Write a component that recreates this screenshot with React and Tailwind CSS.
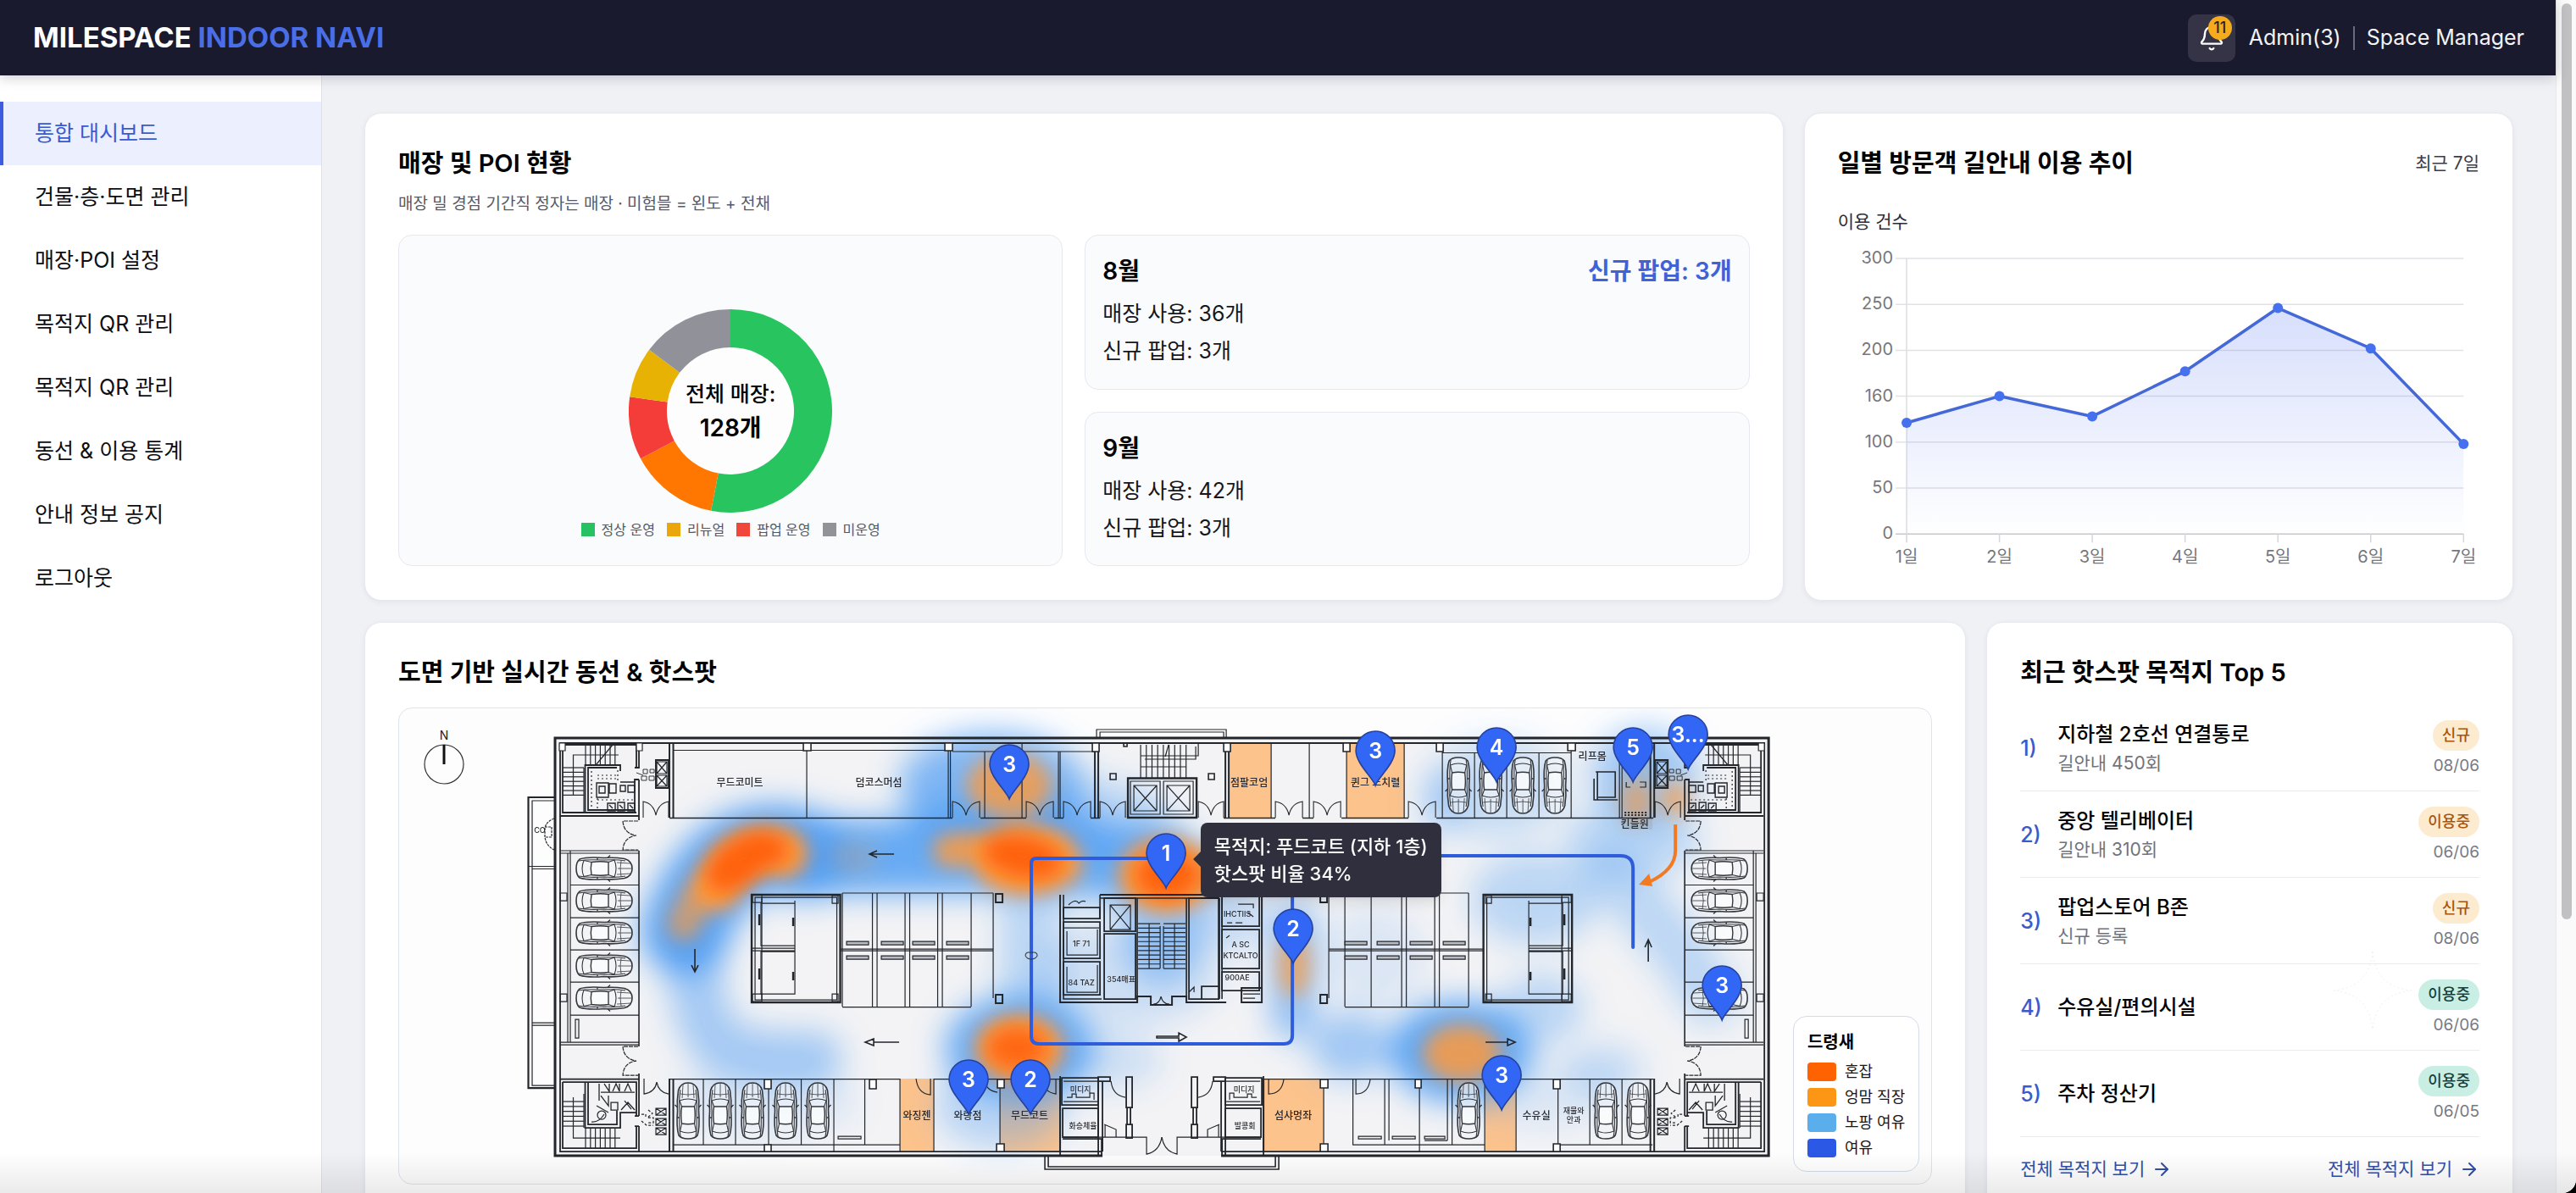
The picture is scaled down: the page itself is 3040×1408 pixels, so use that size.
import React from "react";
import { ArrowRight, Bell } from "lucide-react";

const menu = [
  "통합 대시보드",
  "건물·층·도면 관리",
  "매장·POI 설정",
  "목적지 QR 관리",
  "목적지 QR 관리",
  "동선 & 이용 통계",
  "안내 정보 공지",
  "로그아웃",
];

const storeShare = [
  { color: "#28c45f", from: 0, to: 191 },
  { color: "#ff7600", from: 191, to: 242 },
  { color: "#f43c38", from: 242, to: 278 },
  { color: "#e8b204", from: 278, to: 307 },
  { color: "#919299", from: 307, to: 360 },
];

const storeLegend = [
  { label: "정상 운영", color: "bg-[#27c062]" },
  { label: "리뉴얼", color: "bg-[#eaa60b]" },
  { label: "팝업 운영", color: "bg-[#f0473a]" },
  { label: "미운영", color: "bg-[#929398]" },
];

const months = [
  { name: "8월", used: 36, popup: 3, highlight: "신규 팝업: 3개" },
  { name: "9월", used: 42, popup: 3 },
];

const yAxis = [
  { value: 0, label: "0" },
  { value: 50, label: "50" },
  { value: 100, label: "100" },
  { value: 150, label: "160" },
  { value: 200, label: "200" },
  { value: 250, label: "250" },
  { value: 300, label: "300" },
];

const visits = [
  { day: "1일", value: 121 },
  { day: "2일", value: 150 },
  { day: "3일", value: 128 },
  { day: "4일", value: 177 },
  { day: "5일", value: 246 },
  { day: "6일", value: 202 },
  { day: "7일", value: 98 },
];

const hotspots = [
  { name: "지하철 2호선 연결통로", note: "길안내 450회", badge: "신규", tone: "orange", date: "08/06" },
  { name: "중앙 텔리베이터", note: "길안내 310회", badge: "이용중", tone: "orange", date: "06/06" },
  { name: "팝업스토어 B존", note: "신규 등록", badge: "신규", tone: "orange", date: "08/06" },
  { name: "수유실/편의시설", badge: "이용중", tone: "green", date: "06/06" },
  { name: "주차 정산기", badge: "이용중", tone: "green", date: "06/05" },
];

const heatLegend = [
  { label: "혼잡", color: "bg-[#ff6200]" },
  { label: "엉맘 직장", color: "bg-[#fd9615]" },
  { label: "노팡 여유", color: "bg-[#5aaeec]" },
  { label: "여유", color: "bg-[#2b59e6]" },
];

// pin tips on the floor plan
const pins = [
  { x: 1190, y: 942, label: "3" },
  { x: 1375, y: 1047, label: "1" },
  { x: 1525, y: 1136, label: "2" },
  { x: 1622, y: 926, label: "3" },
  { x: 1765, y: 922, label: "4" },
  { x: 1926, y: 922, label: "5" },
  { x: 1991, y: 907, label: "3..." },
  { x: 2031, y: 1203, label: "3" },
  { x: 1771, y: 1309, label: "3" },
  { x: 1142, y: 1314, label: "3" },
  { x: 1215, y: 1314, label: "2" },
];

const roomLabels = [
  { x: 872, y: 927, text: "무드코미트" },
  { x: 1036, y: 927, text: "덤코스머섬" },
  { x: 1473, y: 927, text: "점팔코엄" },
  { x: 1622, y: 927, text: "퀸그 느치렬" },
  { x: 1878, y: 896, text: "리프몸" },
  { x: 1928, y: 976, text: "킨들원" },
  { x: 1081, y: 1320, text: "와징젠" },
  { x: 1141, y: 1320, text: "와랑점" },
  { x: 1214, y: 1320, text: "무드코트" },
  { x: 1525, y: 1320, text: "섬샤멍좌" },
  { x: 1812, y: 1320, text: "수유실" },
];

const tinyLabels = [
  { x: 1856, y: 1313, text: "재물와" },
  { x: 1856, y: 1324, text: "안과" },
  { x: 1322, y: 1158, text: "354매표" },
  { x: 1277, y: 1331, text: "화승체율" },
  { x: 1468, y: 1331, text: "발콩회" },
  { x: 1274, y: 1288, text: "미디지" },
  { x: 1467, y: 1288, text: "미디지" },
  { x: 1275, y: 1116, text: "1F 71" },
  { x: 1275, y: 1162, text: "84 TAZ" },
  { x: 1459, y: 1081, text: "IHCTIIS" },
  { x: 1463, y: 1117, text: "A SC" },
  { x: 1463, y: 1130, text: "KTCALTO" },
  { x: 1459, y: 1156, text: "900AE" },
  { x: 636, y: 982, text: "CO" },
];

function range(start, end, step) {
  const out = [];
  for (let v = start; v <= end; v += step) out.push(v);
  return out;
}

function Card({ className = "", children }) {
  return (
    <section
      className={`rounded-[20px] border border-[#e7e9f1] bg-white p-[39px] shadow-[0_2px_6px_rgba(30,35,80,0.06)] ${className}`}
    >
      {children}
    </section>
  );
}

function CardTitle({ children }) {
  return <h2 className="text-[29px] leading-10 font-semibold text-black">{children}</h2>;
}

function ringSlice(from, to, outer, inner) {
  const at = (deg, r) => {
    const a = ((deg - 90) * Math.PI) / 180;
    return `${120 + r * Math.cos(a)} ${120 + r * Math.sin(a)}`;
  };
  const big = to - from > 180 ? 1 : 0;
  return `M${at(from, outer)} A${outer} ${outer} 0 ${big} 1 ${at(to, outer)} L${at(to, inner)} A${inner} ${inner} 0 ${big} 0 ${at(from, inner)} Z`;
}

function StoreDonut() {
  return (
    <div className="flex min-h-[391px] flex-col items-center justify-end rounded-2xl border border-[#e6e8ef] bg-[#fafbfd] pb-[30px]">
      <div className="relative size-[240px]">
        <svg viewBox="0 0 240 240" className="size-full">
          <circle cx="120" cy="120" r="76" fill="#fdfdfe" />
          {storeShare.map((s) => (
            <path key={s.color} d={ringSlice(s.from, s.to, 120, 75)} fill={s.color} />
          ))}
        </svg>
        <div className="absolute inset-0 flex flex-col items-center justify-center text-black">
          <span className="text-[25px] leading-10 font-medium">전체 매장:</span>
          <span className="text-[28px] leading-10 font-semibold">128개</span>
        </div>
      </div>
      <ul className="mt-2 flex gap-3.5 text-[16px] leading-6 text-[#55565c]">
        {storeLegend.map((item) => (
          <li key={item.label} className="flex items-center gap-2">
            <span className={`size-4 ${item.color}`} />
            {item.label}
          </li>
        ))}
      </ul>
    </div>
  );
}

function MonthBox({ month }) {
  return (
    <div className="flex-1 rounded-2xl border border-[#e6e8ef] bg-[#fafbfd] px-5 pt-[22px]">
      <div className="flex justify-between text-[28px] leading-10 font-semibold">
        <h3 className="text-black">{month.name}</h3>
        {month.highlight && <span className="text-[#3f62d4]">{month.highlight}</span>}
      </div>
      <p className="mt-2 text-[25px] leading-[44px] text-[#16171c]">매장 사용: {month.used}개</p>
      <p className="text-[25px] leading-[44px] text-[#16171c]">신규 팝업: {month.popup}개</p>
    </div>
  );
}

function VisitChart() {
  const px = (i) => 81 + i * 109.5;
  const py = (v) => 352 - (v / 300) * 325;
  const line = visits.map((v, i) => `${px(i)},${py(v.value)}`).join(" ");
  return (
    <svg viewBox="0 0 757 391" className="mt-0.5 block w-full">
      <defs>
        <linearGradient id="visitFill" x1="0" y1="0" x2="0" y2="1">
          <stop offset="0" stopColor="#4a6df0" stopOpacity="0.22" />
          <stop offset="0.7" stopColor="#4a6df0" stopOpacity="0.07" />
          <stop offset="1" stopColor="#4a6df0" stopOpacity="0" />
        </linearGradient>
      </defs>
      {yAxis.map((t) => (
        <g key={t.value}>
          <line
            x1="68"
            x2="738"
            y1={py(t.value)}
            y2={py(t.value)}
            stroke={t.value ? "#e1e2e6" : "#c6c7cb"}
            strokeWidth="1.5"
          />
          <text x="65" y={py(t.value) + 6} textAnchor="end" fontSize="20" fill="#76777d">
            {t.label}
          </text>
        </g>
      ))}
      <line x1="81" x2="81" y1="27" y2="352" stroke="#dcdde1" strokeWidth="1.5" />
      {visits.map((v, i) => (
        <g key={v.day}>
          <line x1={px(i)} x2={px(i)} y1="352" y2="362" stroke="#d5d6da" strokeWidth="1.5" />
          <text x={px(i)} y="386" textAnchor="middle" fontSize="20" fill="#76777d">
            {v.day}
          </text>
        </g>
      ))}
      <polygon points={`81,352 ${line} 738,352`} fill="url(#visitFill)" />
      <polyline points={line} fill="none" stroke="#4468d8" strokeWidth="3.5" strokeLinejoin="round" />
      {visits.map((v, i) => (
        <circle key={v.day} cx={px(i)} cy={py(v.value)} r="6" fill="#4570ee" />
      ))}
    </svg>
  );
}

function CarSymbol() {
  // nose points right, centred on 0,0
  return (
    <g fill="none" stroke="#33363c" strokeWidth="1.1">
      <path
        d="M-29 -11 Q-20 -14 0 -12.5 Q12 -13.5 24 -11.5 Q33 -9 33 0 Q33 9 24 11.5 Q12 13.5 0 12.5 Q-20 14 -29 11 Q-33 8 -33 0 Q-33 -8 -29 -11 Z"
        fill="#f4f5f6"
        fillOpacity="0.6"
        strokeWidth="1.6"
      />
      <path d="M-30 -9 Q-20 -11 0 -10 Q14 -11 25 -9 M-30 9 Q-20 11 0 10 Q14 11 25 9" />
      <path
        d="M-15 -7.5 Q-4 -9 5 -7.5 V7.5 Q-4 9 -15 7.5 Q-16.5 0 -15 -7.5 Z"
        fill="#fff"
        fillOpacity="0.6"
        strokeWidth="1.4"
      />
      <path d="M5 -7.5 L12 -10 Q16 0 12 10 L5 7.5 M-15 -7.5 L-24 -9.5 Q-28 0 -24 9.5 L-15 7.5" />
      <path d="M15 -7 L31 -6 M15 7 L31 6 M16 0 H32 M20 -9 Q18 0 20 9" strokeWidth="0.8" />
      <path d="M4 -12.5 L7 -15.5 M4 12.5 L7 15.5 M-8 -12.5 V-10 M-8 12.5 V10" strokeWidth="1.4" />
    </g>
  );
}

function Car({ x, y, turn = 0 }) {
  return (
    <g transform={`translate(${x} ${y}) rotate(${turn})`}>
      <CarSymbol />
    </g>
  );
}

function DoubleDoor({ x, y = 945, w = 32 }) {
  const c = x + w / 2;
  return (
    <path
      d={`M${x} ${y + 19} V${y} Q${c - 3} ${y + 2} ${c} ${y + 16} Q${c + 3} ${y + 2} ${x + w} ${y} V${y + 19}`}
      strokeWidth="1.1"
    />
  );
}

function CrossBox({ x, y, w, h }) {
  return <path d={`M${x} ${y} h${w} v${h} h${-w} Z l${w} ${h} M${x + w} ${y} l${-w} ${h}`} />;
}

// Stair towers, parking bays and kiosk at one end of the building
function EndWing({ id }) {
  return (
    <g id={id}>
      {/* upper tower */}
      <path d="M663 878 H750 V905 M753 876 V905 H748 M753 919 H748 V958 M753 919 V967 M663 878 V958 H750 M660 962 H753" strokeWidth="1.8" />
      <path d="M659 876 h7 v9 h-7 Z M750 876 h7 v9 h-7 Z" fill="#fff" />
      {range(905, 938, 5.4).map((y) => (
        <line key={y} x1="663" x2="688" y1={y} y2={y} />
      ))}
      {range(690, 726, 5.8).map((x) => (
        <line key={x} x1={x} x2={x} y1="878" y2="902" />
      ))}
      <path d="M729 890 H675.5 V938 M688 905 V958 M722 878 L702 902" />
      <path d="M731 909 V902 H689.5 V958 H748 M727 905 H693 V955 H748" strokeWidth="1.8" />
      <path d="M703 923 h14 v17 h-14 Z M718 924 h8 v11 h-8 Z M731 926 h6 v7 h-6 Z M740 926 h8 v8 h-8 Z M706 927 h7 v8 h-7 Z M731 922 H749" strokeWidth="1.4" />
      <path d="M716 947 h9 v9 h-9 Z M728 946 h8 v10 h-8 Z M740 947 h8 v9 h-8 Z M718 949 l4 4 M730 949 l4 4 M742 949 l4 4" strokeWidth="1.4" />
      <path d="M697 909 V954 M704 914 H727 M704 918 H727 M728 908 V922 M704 941 V956 M704 943 H748" strokeDasharray="2 3" />
      <path d="M758 907 h5 v5 h-5 Z M766 907 h5 v4 h-5 Z M756 915 h6 v5 h-6 Z M765 915 h6 v5 h-6 Z M750 911 L758 914" strokeWidth="0.9" />
      <CrossBox x={774} y={898} w={12} h={14} />
      <CrossBox x={774} y={914} w={12} h={13} />
      <path d="M773 896 h15 v33 h-15 Z" strokeWidth="2" />
      <path d="M789 876 V964 M793.5 876 V964" strokeWidth="2" />
      <DoubleDoor x={758} w={30} />
      {/* upper side entrance */}
      <path d="M660 1003 H753 M660 1006 H753" />
      <path d="M752 968 H734 Q735 983 750 985 Q735 987 734 1002 H752" strokeDasharray="5 1" />
      {/* parking column */}
      <path d="M672 1003 V1229 M669 1006 V1229 M660 1229 H753 M660 1232 H753" />
      <path d="M753 1003 V1234" strokeWidth="1.6" />
      <path d="M672 1043.5 H753 M672 1082 H753 M672 1120 H753 M672 1158 H753 M672 1197 H753" />
      <path d="M678 1202 h4 v22 h-4 Z M660 1053 h8 v9 h-8 Z M660 1172 h8 v9 h-8 Z" />
      {/* lower side entrance */}
      <path d="M752 1234 H734 Q735 1249 750 1251 Q735 1253 734 1268 H752" strokeDasharray="5 1" />
      <path d="M660 1272.5 H753 M753 1266 V1316 M753 1328 V1358 M748 1316 H753 M748 1328 H753" strokeWidth="1.8" />
      {/* lower tower */}
      <path d="M663 1276 H750 V1316 M663 1276 V1354 H750 V1328" strokeWidth="1.8" />
      <path d="M689.5 1276 V1330 H731 V1312 H750 M693 1277 V1326 H727 V1310" strokeWidth="1.8" />
      {range(1299, 1330, 5.8).map((y) => (
        <line key={y} x1="663" x2="688" y1={y} y2={y} />
      ))}
      {range(690, 726, 5.8).map((x) => (
        <line key={x} x1={x} x2={x} y1="1331" y2="1354" />
      ))}
      <path d="M675.5 1294 V1342 H731 M688 1290 V1330" />
      <path d="M706 1278 V1298 M708 1288 H748 M712 1278 l6 9 v-9 M722 1287 l4 -9 l4 9 v-9 M736 1287 l4 -9 l4 9 M708 1292 l9 12 v-12 M720 1300 h8 v9 h-8 Z M732 1309 l8 -9 l8 9 M736 1298 l8 10" strokeWidth="1.3" />
      <circle cx="709" cy="1315" r="5" />
      <path d="M697 1323 Q706 1324 712 1314 M717 1312 L703 1304" />
      <CrossBox x={773} y={1307} w={12} h={8} />
      <CrossBox x={773} y={1319} w={12} h={8} />
      <CrossBox x={773} y={1330} w={12} h={8} />
      <path d="M756 1314 h5 v5 M764 1309 l5 4 l-6 5 h7 v6 h-6 M756 1322 l6 5 h8" strokeDasharray="3 2" />
      <path d="M789 1272 V1358 M793.5 1272 V1358" strokeWidth="2" />
      <path d="M759 1272 V1290 Q772 1288 774 1276 Q776 1288 788 1290" />
      {/* kiosk block */}
      <path d="M886 1055 H990.5 V1182 H886 Z" strokeWidth="2.4" />
      <path d="M898 1058 H986.5 V1179 H890 V1058 H898 V1179" strokeWidth="1.2" />
      <path d="M887 1055 h11 v9 h-11 Z M981 1056 h7 v9 h-7 Z M887 1172 h11 v9 h-11 Z M981 1172 h7 v9 h-7 Z" />
      <path d="M897 1065 h40 v50 h-40 Z M897 1122 h40 v50 h-40 Z M886 1118 H937 M886 1121 H937 M937 1062 V1172" />
      <path d="M895 1078 v13 M935 1082 v10 M895 1142 v13 M935 1146 v10" strokeWidth="2.4" />
    </g>
  );
}

function LobbyHalf() {
  return (
    <g>
      <path d="M1252 1271 h43 v32 h-43 Z M1253 1307 h42 v34 h-42 Z M1253 1343 h46 v20" strokeWidth="1.8" />
      <path d="M1254 1275 H1294 M1254 1299 H1294 M1258 1294 h6 v-4 h5 v4 h16 v-5 h5 v8" />
      <path d="M1295 1271 V1363 M1300 1275 V1358 M1250 1269 V1363" strokeWidth="1.8" />
      <path d="M1294 1270 h15 v5 h-15 M1328 1270 h7 v36 h-7 Z M1328 1326 h7 v16 h-7 Z M1329 1306 V1326 M1333 1306 V1326" strokeWidth="1.8" />
      <path d="M1310 1275 Q1312 1292 1327 1294 M1302 1326 L1316 1332 V1341 M1303 1326 V1341" />
      <path d="M1253 1341 H1352 V1361 Q1367 1358 1370 1341" />
    </g>
  );
}

function FloorHeat() {
  return (
    <g>
      <g filter="url(#heatWide)" fill="none" strokeLinecap="round" strokeLinejoin="round" stroke="#4f9df3">
        <path d="M808 1098 Q836 1022 885 1005 Q915 996 950 1008" strokeWidth="104" opacity="0.95" />
        <path d="M950 1010 H1120 L1220 1008 L1375 1020" strokeWidth="88" opacity="0.85" />
        <path d="M818 1110 Q816 1195 850 1235 Q900 1252 960 1248" strokeWidth="66" opacity="0.48" />
        <path d="M1216 1050 V1230" strokeWidth="74" opacity="0.34" />
        <path d="M1525 1090 V1200" strokeWidth="52" opacity="0.6" />
        <path d="M1900 1030 Q1980 1110 2016 1175" strokeWidth="66" opacity="0.34" />
        <path d="M1370 1050 V1115" strokeWidth="90" opacity="0.5" />
        <g fill="#4f9df3" stroke="none">
          <ellipse cx="1170" cy="925" rx="110" ry="62" opacity="0.7" />
          <ellipse cx="1180" cy="968" rx="120" ry="40" opacity="0.5" />
          <ellipse cx="1300" cy="965" rx="80" ry="44" opacity="0.35" />
          <ellipse cx="1202" cy="1236" rx="88" ry="62" opacity="0.85" />
          <ellipse cx="1180" cy="1305" rx="78" ry="50" opacity="0.35" />
          <ellipse cx="1300" cy="1250" rx="70" ry="34" opacity="0.22" />
          <ellipse cx="1330" cy="1150" rx="110" ry="60" opacity="0.22" />
          <ellipse cx="1440" cy="1080" rx="50" ry="40" opacity="0.3" />
          <ellipse cx="1592" cy="1234" rx="46" ry="40" opacity="0.5" />
          <ellipse cx="1722" cy="1240" rx="84" ry="60" opacity="0.9" />
          <ellipse cx="1766" cy="930" rx="80" ry="60" opacity="0.26" />
          <ellipse cx="1702" cy="945" rx="26" ry="40" opacity="0.35" />
          <ellipse cx="1810" cy="1060" rx="76" ry="54" opacity="0.34" />
          <ellipse cx="1925" cy="990" rx="80" ry="44" opacity="0.34" />
          <ellipse cx="1940" cy="915" rx="62" ry="58" opacity="0.5" />
          <ellipse cx="1818" cy="1190" rx="50" ry="42" opacity="0.34" />
          <ellipse cx="1892" cy="1262" rx="46" ry="30" opacity="0.28" />
          <ellipse cx="1820" cy="1290" rx="90" ry="40" opacity="0.14" />
          <ellipse cx="900" cy="1300" rx="110" ry="40" opacity="0.14" />
          <ellipse cx="1620" cy="1130" rx="60" ry="60" opacity="0.14" />
        </g>
      </g>
      <g filter="url(#heatMid)" fill="none" strokeLinecap="round" strokeLinejoin="round" stroke="#ff9a3c">
        <path d="M806 1090 Q822 1050 850 1026" strokeWidth="40" opacity="0.65" />
        <path d="M844 1046 Q862 1010 890 1004 Q908 1000 924 1006" strokeWidth="58" />
        <path d="M1120 1003 Q1180 996 1210 1010 L1256 1022" strokeWidth="40" opacity="0.85" />
        <g fill="#ff9a3c" stroke="none">
          <ellipse cx="1190" cy="926" rx="50" ry="38" opacity="0.8" />
          <ellipse cx="1210" cy="1014" rx="64" ry="42" />
          <ellipse cx="1375" cy="1032" rx="56" ry="44" />
          <ellipse cx="1202" cy="1236" rx="52" ry="40" />
          <ellipse cx="1526" cy="1138" rx="19" ry="38" opacity="0.7" />
          <ellipse cx="1724" cy="1242" rx="46" ry="34" opacity="0.85" />
          <ellipse cx="1930" cy="945" rx="18" ry="26" opacity="0.6" />
          <ellipse cx="1976" cy="942" rx="16" ry="22" opacity="0.7" />
          <ellipse cx="1005" cy="1010" rx="30" ry="20" opacity="0.2" />
        </g>
      </g>
      <g filter="url(#heatCore)" fill="#ff620a">
        <ellipse cx="870" cy="1018" rx="44" ry="26" transform="rotate(-38 870 1018)" />
        <ellipse cx="896" cy="1002" rx="34" ry="22" />
        <ellipse cx="1206" cy="1010" rx="48" ry="25" transform="rotate(12 1206 1010)" />
        <ellipse cx="1376" cy="1032" rx="38" ry="28" />
        <ellipse cx="1199" cy="1236" rx="36" ry="25" opacity="0.9" />
      </g>
    </g>
  );
}

function FloorLines() {
  return (
    <g fill="none" stroke="#23262b" strokeWidth="1.2">
      {/* shell */}
      <path d="M1300 1363 H654 V870 H2086 V1363 H1440" strokeWidth="3" />
      <path d="M1300 1358 H660 V876 H2081 V1358 H1440" strokeWidth="1.8" />
      <path d="M1293 870 V860 H1446 V870 M1297 870 V863 H1443 V870" />
      <path d="M1232 1364 V1379 H1508 V1364 M1236 1364 V1376 H1504 V1364" strokeWidth="1.6" />
      <path d="M654 940 H622.5 V1283 H654" strokeWidth="2.2" />
      <path d="M654 944 H627 V1280 H654 M622 1021.5 H654 M627 1024.5 H654 M627 1206 H654 M627 1209 H654" />
      <path d="M653 965 Q640 970 642 982 Q641 996 653 1002 M642 975 h8 v12 h-8 Z" strokeDasharray="3 1" />

      <EndWing id="west" />
      <g transform="translate(2740 0) scale(-1 1)">
        <EndWing id="east" />
      </g>

      {/* upper shops */}
      <path d="M789 964.5 H1123 M1156 964.5 H1210 M1243 964.5 H1254 M1286 964.5 H1297 M1443 964.5 H1504 M1536 964.5 H1549 M1582 964.5 H1661 M1694 964.5 H1950" strokeWidth="1.6" />
      <path d="M793 884.5 H1118 M1123 886 H1290 M1701 887.5 H1853" />
      <path d="M951 876 V964 M1118 876 V964 M1120.5 876 V964 M1161 886 V964 M1205 876 V964 M1248 886 V964 M1250 886 V964 M1499 876 V964 M1544 876 V964 M1588 876 V964 M1656 876 V964 M1701 876 V964 M1739 887 V964 M1777 887 V964 M1815 887 V964 M1853 876 V964 M1910 876 V964 M1913 876 V964" />
      <path d="M1291 876 V964 M1295 876 V964 M1445 876 V964 M1449 876 V964" strokeWidth="2" />
      <path d="M947 876 h9 v9 h-9 Z M1114 876 h9 v9 h-9 Z M1288 876 h8 v10 h-8 Z M1443 876 h8 v10 h-8 Z M1584 876 h8 v10 h-8 Z M1694 876 h8 v10 h-8 Z M1849 876 h9 v9 h-9 Z" fill="#fff" strokeWidth="1.6" />
      <DoubleDoor x={1123} />
      <DoubleDoor x={1210} />
      <DoubleDoor x={1254} />
      <DoubleDoor x={1297} w={30} />
      <DoubleDoor x={1413} w={30} />
      <DoubleDoor x={1504} />
      <DoubleDoor x={1549} />
      <DoubleDoor x={1661} />
      <path d="M1880 918 V943 H1908 M1884 943 V910 H1905 M1882 910 h23 v30 h-20" strokeWidth="1.6" />
      <path d="M1916 958 h28 M1916 961 h28" strokeDasharray="2 2" strokeWidth="2" />
      <path d="M1918 922 v6 h5 M1934 922 h7 v6 h-7" />

      {/* upper stairs and lifts */}
      {range(1345, 1400, 6.7).map((x) => (
        <line key={x} x1={x} x2={x} y1="878" y2="917" />
      ))}
      <path d="M1345 891 H1413 V876 M1350 895 H1410 V880 M1345 904 H1399 M1378 878 l-4 14" />
      <path d="M1330 917.5 h81 v46.5 h-81 Z" strokeWidth="2.4" />
      <path d="M1333 921 h35 v39 h-35 Z M1372 921 h35 v39 h-35 Z" />
      <CrossBox x={1337} y={926} w={27} h={30} />
      <CrossBox x={1376} y={926} w={27} h={30} />
      <path d="M1309 912 h7 v7 h-7 Z M1425 912 h7 v7 h-7 Z M1325 876 h4 v4 h-4 Z" strokeWidth="1.6" />

      {/* inner parking bays */}
      <path d="M993 1053 H1171 M993 1187.5 H1145 M993 1053 V1187 M1028.5 1053 V1187 M1034 1053 V1187 M1067 1053 V1187 M1072.5 1053 V1187 M1105.5 1053 V1187 M1111 1053 V1187 M1145 1053 V1187 M1171 1053 V1177" />
      <path d="M990 1119 H1171 M990 1121 H1171" />
      <path d="M1567 1053 H1732 M1586 1187.5 H1732 M1567 1053 V1177 M1586 1053 V1187 M1617 1053 V1187 M1653 1053 V1187 M1658.5 1053 V1187 M1692 1053 V1187 M1697.5 1053 V1187 M1732 1053 V1187" />
      <path d="M1567 1119 H1750 M1567 1121 H1750" />
      {[998, 1039, 1076, 1116, 1586, 1624, 1663, 1702].map((x) => (
        <path key={x} d={`M${x} 1110 h26 v4 h-26 Z M${x} 1127 h26 v4 h-26 Z`} fill="#b9bcc2" />
      ))}
      <path d="M1174 1054 h8 v10 h-8 Z M1174 1173 h8 v10 h-8 Z M1557 1054 h8 v10 h-8 Z M1557 1173 h8 v10 h-8 Z" strokeWidth="2" />

      {/* core block */}
      <path d="M1250 1055 V1182 H1341 V1175 H1357 V1185 H1382 V1175 H1399 V1182 H1446 M1488 1055 V1182 H1464 V1165 H1488 M1297 1055 H1490" strokeWidth="2" />
      <path d="M1254 1055 V1178 H1299 M1297 1055 V1083 M1297 1059 H1437 M1341 1059 V1175 M1399 1059 V1175 M1438 1059 V1178 M1441 1059 V1178" strokeWidth="1.6" />
      <path d="M1254 1070 h43 v13 h-43 Z M1254 1087 h43 v43 h-43 Z M1254 1134 h43 v39 h-43 Z M1302 1059 h37 v39 h-37 Z M1302 1101 h37 v77 h-37 Z M1402 1059 h35 v119 h-35 Z M1417 1163 h20 v15 h-20 Z M1441 1057 h44 v35 h-44 Z M1441 1096 h44 v46 h-44 Z M1441 1146 h44 v22 h-44 Z" strokeWidth="1.8" />
      <path d="M1255 1094 h41 M1258 1098 v28 h36 v-30 M1258 1140 v30 h36 v-32 M1260 1067 q8 -8 12 -2 q4 -4 8 -2 M1466 1172 H1486 M1466 1177 H1480 M1447 1088 h6 m4 0 h8 M1460 1066 h18 v5 M1472 1076 l6 5 M1446 1106 l4 -3 M1402 1170 l6 -6 v6" />
      <CrossBox x={1309} y={1067} w={24} h={29} />
      {range(1089, 1143, 5.3).map((y) => (
        <path key={y} d={`M1342 ${y} H1368 M1372 ${y} H1398`} />
      ))}
      <path d="M1355 1089 V1142 M1368 1092 V1142 M1372 1092 V1142 M1385 1089 V1142 M1360 1184 Q1367 1184 1369 1175 Q1371 1184 1379 1184" />

      {/* lower row */}
      <path d="M789 1272.5 H1061 M793 1350 H1061 M829 1272 V1350 M867 1272 V1350 M906 1272 V1350 M944.5 1272 V1350 M983 1272 V1358 M1019.5 1272 V1350 M1061 1272 V1358 M1101 1272 V1358 M1179 1272 V1358 M1101 1272.5 H1250" />
      <path d="M1490 1272.5 H1950 M1561 1272 V1358 M1595.5 1272 V1350 M1633 1272 V1350 M1638 1272 V1345 M1674 1272 V1358 M1707 1272 V1345 M1712.5 1272 V1350 M1751 1272 V1358 M1788 1272 V1358 M1837.5 1272 V1350 M1875 1272 V1350 M1913 1272 V1350 M1595 1350 H1751 M1837 1350 H1949 M1680 1345 H1707" />
      <path d="M1490 1272 V1358 M1250 1272 V1358" strokeWidth="2" />
      <path d="M988 1340 h27 v3 h-27 Z M1602 1340 h27 v3 h-27 Z M1642 1340 h27 v3 h-27 Z M1680 1340 h24 v3 h-24 Z" />
      <path d="M901 1273 h8 v11 h-8 Z M1025 1273 h8 v11 h-8 Z M901 1350 h8 v8 h-8 Z M1176 1273 h8 v10 h-8 Z M1175 1349 h9 v9 h-9 Z M1557 1273 h9 v10 h-9 Z M1557 1349 h9 v9 h-9 Z M1669 1273 h7 v10 h-7 Z M1832 1273 h8 v11 h-8 Z M1832 1349 h8 v9 h-8 Z" fill="#fff" strokeWidth="1.6" />
      <path d="M1080 1272 Q1082 1290 1097 1291 V1272 M1160 1272 Q1162 1286 1176 1288 M1228 1272 Q1230 1288 1245 1290 V1272 M1496 1272 V1290 Q1512 1290 1514 1272 M1599 1272 V1290 Q1614 1290 1616 1272" />
      <LobbyHalf />
      <g transform="translate(2740 0) scale(-1 1)">
        <LobbyHalf />
      </g>

      {/* driving direction arrows */}
      <path d="M1054 1007 H1025 M1034 1003 L1025 1007 L1034 1011 M819 1119 V1145 M815 1138 L819 1146 L823 1138 M1944 1134 V1108 M1940 1117 L1944 1108 L1948 1117" strokeWidth="1.6" />
      <path d="M1060 1229 H1030 M1030 1225 L1020 1229 L1030 1233 Z M1752 1229 H1778 M1778 1225 L1787 1229 L1778 1233 Z M1364 1222 h26 v-4 l9 5 l-9 5 v-4 h-26 Z" strokeWidth="1.6" />

      {[1024, 1062, 1100, 1139, 1177].map((y) => (
        <Car key={y} x={712} y={y} />
      ))}
      {[1024, 1062, 1100, 1177].map((y) => (
        <Car key={y} x={2028} y={y} turn={180} />
      ))}
      {[1720, 1758, 1796, 1834].map((x) => (
        <Car key={x} x={x} y={926} turn={90} />
      ))}
      {[811, 849, 887, 926, 964, 1732, 1894, 1932].map((x) => (
        <Car key={x} x={x} y={1310} turn={-90} />
      ))}
    </g>
  );
}

function Pin({ x, y, label }) {
  return (
    <g transform={`translate(${x} ${y})`}>
      <path
        d="M0 0 C-3 -9 -23 -26 -23 -41 A23 23 0 0 1 23 -41 C23 -26 3 -9 0 0 Z"
        fill="#3266f5"
        stroke="#26419c"
        strokeWidth="1.6"
      />
      <text y="-32" textAnchor="middle" fontSize="25" fontWeight="600" fill="#fff">
        {label}
      </text>
    </g>
  );
}

function FloorMap() {
  return (
    <div className="relative mt-[21px] overflow-hidden rounded-2xl border border-[#e0e4ee] bg-[#fdfdfe]">
      <svg viewBox="470 835 1808 561" className="block w-full">
        <defs>
          <filter id="heatWide" x="-20%" y="-20%" width="140%" height="140%">
            <feGaussianBlur stdDeviation="18" />
          </filter>
          <filter id="heatMid" x="-20%" y="-20%" width="140%" height="140%">
            <feGaussianBlur stdDeviation="11" />
          </filter>
          <filter id="heatCore" x="-20%" y="-20%" width="140%" height="140%">
            <feGaussianBlur stdDeviation="11" />
          </filter>
        </defs>

        {/* compass */}
        <text x="523" y="872" textAnchor="middle" fontSize="14" fill="#222">
          N
        </text>
        <circle cx="523" cy="901" r="23" fill="none" stroke="#333" strokeWidth="1.2" />
        <line x1="523" x2="523" y1="878" y2="901" stroke="#111" strokeWidth="3" />

        <rect x="654" y="870" width="1432" height="493" fill="#f3f3f5" />
        <g fill="#fdc38c">
          <rect x="1449" y="876" width="50" height="88" />
          <rect x="1588" y="876" width="68" height="88" />
          <rect x="1061" y="1272" width="40" height="86" />
          <rect x="1179" y="1272" width="71" height="86" />
          <rect x="1490" y="1272" width="71" height="86" />
          <rect x="1751" y="1272" width="37" height="86" />
        </g>
        <rect x="1913" y="876" width="36" height="102" fill="#d9cbb5" opacity="0.6" />
        <FloorHeat />
        <FloorLines />

        {roomLabels.map((r) => (
          <text key={r.text} x={r.x} y={r.y} textAnchor="middle" fontSize="12" fontWeight="500" fill="#2a2b30">
            {r.text}
          </text>
        ))}
        {tinyLabels.map((r, i) => (
          <text key={i} x={r.x} y={r.y} textAnchor="middle" fontSize="9" fontWeight="500" fill="#2a2b30">
            {r.text}
          </text>
        ))}

        {/* guided route */}
        <g fill="none" stroke="#2f5cdb" strokeWidth="4" strokeLinecap="round">
          <path d="M1375 1012 H1222 Q1216 1012 1216 1018 V1222 Q1216 1231 1225 1231 H1514 Q1524 1231 1524 1221 V1040" />
          <path d="M1690 1009 H1911 Q1926 1009 1926 1024 V1117" />
        </g>
        <path d="M1976 972 V1003 C1976 1022 1960 1033 1945 1040" fill="none" stroke="#f27a22" strokeWidth="4" />
        <path d="M1933 1043 L1945 1030 L1949 1045 Z" fill="#f27a22" />
        <path d="M1209 1127 q0 -4 4 -4 h6 q4 0 4 4 q-2 4 -7 4 q-5 0 -7 -4" fill="none" stroke="#333" />

        {pins.map((p) => (
          <Pin key={`${p.x}-${p.y}`} {...p} />
        ))}
      </svg>

      <div className="absolute top-[24%] left-[52.3%] rounded-lg bg-[#302f3e] px-4 py-3 text-[22px] leading-8 font-medium text-white shadow-lg">
        <span className="absolute top-[36px] -left-1.5 size-3.5 rotate-45 bg-[#302f3e]" />
        <p className="relative">목적지: 푸드코트 (지하 1층)</p>
        <p className="relative">핫스팟 비율 34%</p>
      </div>

      <div className="absolute right-3.5 bottom-3.5 rounded-2xl border border-[#d5daea] bg-white px-4 pt-3.5 pb-3">
        <h3 className="text-[20px] leading-8 font-semibold text-black">드령새</h3>
        <ul className="mt-1 text-[18px] leading-[30px] text-[#17181c]">
          {heatLegend.map((item) => (
            <li key={item.label} className="flex items-center gap-2.5">
              <span className={`h-[22px] w-[34px] rounded ${item.color}`} />
              {item.label}
            </li>
          ))}
        </ul>
      </div>
    </div>
  );
}

function HotspotList() {
  return (
    <ol className="relative mt-[18px]">
      {hotspots.map((h, i) => (
        <li key={h.name} className="flex h-[102px] items-center border-b border-[#ebecf0] last:border-b-0">
          <span className="w-11 text-[25px] leading-9 font-medium text-[#3a5bcb]">{i + 1})</span>
          <div className="flex-1">
            <p className="text-[24px] leading-9 font-medium text-black">{h.name}</p>
            {h.note && <p className="text-[21px] leading-8 text-[#71737c]">{h.note}</p>}
          </div>
          <div className="flex flex-col items-end gap-1.5">
            <span
              className={
                h.tone === "orange"
                  ? "rounded-full bg-[#fdebd0] px-[11px] text-[18px] leading-9 font-medium text-[#a9560f]"
                  : "rounded-full bg-[#c9efe4] px-[11px] text-[18px] leading-9 font-medium text-[#16403d]"
              }
            >
              {h.badge}
            </span>
            <span className="text-[19px] leading-6 text-[#777983]">{h.date}</span>
          </div>
        </li>
      ))}
      <svg viewBox="0 0 96 96" className="absolute top-[289px] right-[78px] size-24">
        <path
          d="M48 2 Q52 44 94 48 Q52 52 48 94 Q44 52 2 48 Q44 44 48 2 Z"
          fill="none"
          stroke="#f0f0f2"
          strokeDasharray="2 3"
        />
      </svg>
    </ol>
  );
}

function MoreLink() {
  return (
    <a href="#all" className="flex items-center gap-2 text-[21px] leading-7 text-[#3350a8]">
      전체 목적지 보기
      <ArrowRight className="size-6" strokeWidth={2} />
    </a>
  );
}

export default function App() {
  return (
    <div className="h-screen bg-black font-['Inter','Noto_Sans_CJK_KR',sans-serif]">
      <div className="relative flex h-full overflow-hidden rounded-br-2xl bg-[#f0f1f5]">
        <div className="flex min-w-0 flex-1 flex-col">
          <header className="relative z-10 flex h-[89px] shrink-0 items-center justify-between bg-[#1a1a2e] pr-[37px] pl-[39px] shadow-[0_3px_14px_rgba(20,20,50,0.2)]">
            <h1 className="text-[33px] font-bold text-white">
              MILESPACE <span className="text-[#4a6ee6]">INDOOR NAVI</span>
            </h1>
            <div className="flex items-center text-[25px] text-[#f3f3f6]">
              <button
                type="button"
                aria-label="알림"
                className="relative mr-4 flex size-14 items-center justify-center rounded-[10px] bg-[#353446]"
              >
                <Bell className="size-8 text-white" strokeWidth={1.8} />
                <span className="absolute top-0.5 right-1 flex size-7 items-center justify-center rounded-full bg-[#f6ab1c] text-[18px] font-medium text-[#2b2430]">
                  11
                </span>
              </button>
              <span>Admin(3)</span>
              <span className="mx-3.5 h-7 w-0.5 bg-[#6a6a7c]" />
              <span>Space Manager</span>
            </div>
          </header>

          <div className="flex min-h-0 flex-1">
            <nav className="w-[380px] shrink-0 border-r border-[#dfe1e9] bg-white pt-[31px]">
              {menu.map((item, i) => (
                <a
                  key={i}
                  href={`#menu-${i}`}
                  className={
                    i === 0
                      ? "block border-l-4 border-[#3d5ce0] bg-[#eceffe] pl-[37px] text-[25px] leading-[75px] text-[#3a5ad2]"
                      : "block border-l-4 border-transparent pl-[37px] text-[25px] leading-[75px] text-[#0d0e12]"
                  }
                >
                  {item}
                </a>
              ))}
            </nav>

            <main className="flex min-w-0 flex-1 flex-col gap-[25px] overflow-hidden px-[50px] pt-11">
              <div className="grid shrink-0 grid-cols-[2fr_1fr] gap-6">
                <Card>
                  <CardTitle>매장 및 POI 현황</CardTitle>
                  <p className="mt-3.5 text-[19px] leading-7 text-[#565968]">
                    매장 밀 경점 기간직 정자는 매장 · 미험믈 = 왼도 + 전채
                  </p>
                  <div className="mt-[22px] grid grid-cols-2 gap-[26px]">
                    <StoreDonut />
                    <div className="flex flex-col gap-[26px]">
                      {months.map((m) => (
                        <MonthBox key={m.name} month={m} />
                      ))}
                    </div>
                  </div>
                </Card>

                <Card>
                  <div className="flex items-center justify-between">
                    <CardTitle>일별 방문객 길안내 이용 추이</CardTitle>
                    <span className="text-[21px] leading-7 text-[#3c3d4a]">최근 7일</span>
                  </div>
                  <p className="mt-[35px] text-[21px] leading-7 text-[#2c2d38]">이용 건수</p>
                  <VisitChart />
                </Card>
              </div>

              <div className="grid shrink-0 grid-cols-[76fr_25fr] gap-6">
                <Card>
                  <CardTitle>도면 기반 실시간 동선 & 핫스팟</CardTitle>
                  <FloorMap />
                </Card>

                <Card>
                  <CardTitle>최근 핫스팟 목적지 Top 5</CardTitle>
                  <HotspotList />
                  <div className="mt-6 flex justify-between">
                    <MoreLink />
                    <MoreLink />
                  </div>
                </Card>
              </div>
            </main>
          </div>
        </div>

        <div className="w-6 shrink-0 border-l border-[#e8e8ea] bg-[#fafafa] px-1 pt-1">
          <div className="mx-auto h-[77%] w-3 rounded-full bg-[#c1c1c3]" />
        </div>

        <div className="pointer-events-none absolute inset-x-0 bottom-0 h-12 bg-linear-to-b from-transparent to-black/8" />
      </div>
    </div>
  );
}
